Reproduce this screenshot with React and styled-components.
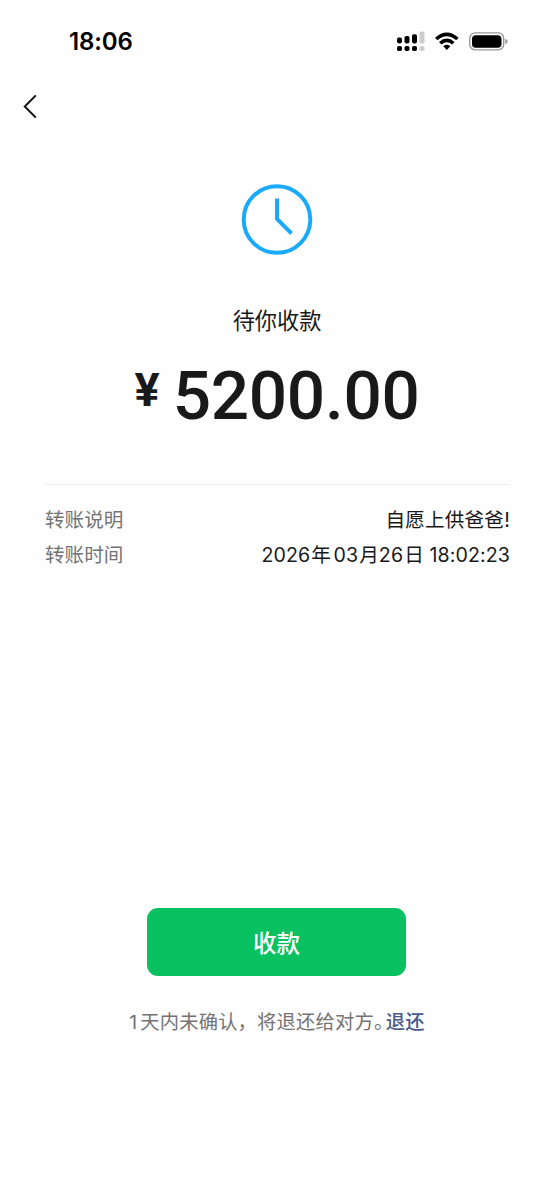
import React from 'react';
import styled, { createGlobalStyle } from 'styled-components';


const GlobalStyle = createGlobalStyle`
  * {
    box-sizing: border-box;
  }

  body {
    margin: 0;
    background-color: #fefefe;
    font-family: Inter, 'Noto Sans CJK SC', sans-serif;
    color: #191919;
  }
`;

const Page = styled.div`
  height: 1200px;
  display: flex;
  flex-direction: column;
  overflow: hidden;
`;

const StatusBar = styled.header`
  height: 82px;
  padding: 2px 46px 0 69px;
  display: flex;
  align-items: center;
  justify-content: space-between;
  color: #000;
`;

const Clock = styled.span`
  font-size: 24px;
  font-weight: 600;
  line-height: 28px;
  letter-spacing: -.1px;
`;

const StatusIcons = styled.svg`
  display: block;
`;

const NavBar = styled.nav`
  height: 50px;
  padding-left: 22px;
  display: flex;
  align-items: center;
`;

const BackButton = styled.button`
  padding: 0;
  border: none;
  background: none;
  line-height: 0;
`;

const Summary = styled.section`
  height: 352px;
  padding-top: 51px;
  display: flex;
  flex-direction: column;
  align-items: center;
`;

const Status = styled.div`
  margin-top: 50px;
  font-size: 22.2px;
  line-height: 32px;
`;

const Amount = styled.div`
  margin-top: 19px;
  display: flex;
  font-family: Roboto, sans-serif;
  font-weight: 500;
`;

const Currency = styled.span`
  margin-right: 13px;
  font-size: 47px;
  font-weight: 700;
  line-height: 67px;
`;

const Figure = styled.span`
  font-size: 67.5px;
  line-height: 80px;
  letter-spacing: -.3px;
`;

const Details = styled.dl`
  height: 424px;
  margin: 0 44px 0 45px;
  padding-top: 18px;
  border-top: 1px solid #efefef;
`;

const Row = styled.div`
  height: 35px;
  display: flex;
  justify-content: space-between;
  font-size: 19.6px;
  line-height: 35px;
  white-space: pre;
`;

const Label = styled.dt`
  color: #737373;
`;

const Value = styled.dd`
  margin: 0;
  letter-spacing: ${props => props.$spacing || '0'};
`;

const Unit = styled.span`
  margin: 0 ${props => props.$after || '0'} 0 1px;
`;

const Footer = styled.footer`
  display: flex;
  flex-direction: column;
  align-items: center;
`;

const AcceptButton = styled.button`
  width: 259px;
  height: 68px;
  margin-right: 1px;
  padding: 0;
  border: none;
  border-radius: 11px;
  background-color: #09c160;
  color: #fff;
  font-family: inherit;
  font-size: 23.5px;
  font-weight: 500;
`;

const Notice = styled.p`
  margin: 31px 0 0;
  font-size: 19.3px;
  line-height: 30px;
  letter-spacing: .2px;
  color: #737373;
  white-space: nowrap;
`;

const Days = styled.span`
  margin-right: 3px;
`;

const FullStop = styled.span`
  margin-right: 2px;
  font-feature-settings: 'halt';
`;

const ReturnLink = styled.span`
  color: #475a8c;
  font-weight: 500;
`;


const SignalIcon = () => (
  <>
    <rect x='1' y='6.6' width='5' height='5.8' rx='1.8' />
    <rect x='8.5' y='5' width='5' height='7.4' rx='1.8' />
    <rect x='16' y='3.2' width='5' height='9.2' rx='1.8' />
    <rect x='23.5' y='.6' width='5' height='11.8' rx='1.6' fill='#ccc' />
    <rect x='1' y='15' width='5' height='5' rx='1.8' />
    <rect x='8.5' y='15' width='5' height='5' rx='1.8' />
    <rect x='16' y='15' width='5' height='5' rx='1.8' />
    <rect x='23.5' y='15' width='5' height='5' rx='1.8' fill='#ccc' />
  </>
);

const WifiIcon = () => (
  <>
    <path d='M39 6.7 Q50.8 -3.6 62.6 6.7 L60.2 9.3 Q50.8 1.2 41.4 9.3 Z' />
    <path d='M43 10.9 Q50.8 4.2 58.6 10.9 L56.1 13.5 Q50.8 9.1 45.5 13.5 Z' />
    <path d='M47.3 15.3 Q50.8 12.4 54.3 15.3 L50.8 18.9 Z' />
  </>
);

const BatteryIcon = () => (
  <>
    <rect x='73.7' y='1.9' width='34' height='17' rx='5.5' fill='none' stroke='#999' strokeWidth='1.4' />
    <rect x='76' y='4.2' width='29.5' height='12.5' rx='3.8' />
    <path d='M109.3 7.7 Q111.6 8.3 111.6 10.4 Q111.6 12.5 109.3 13.1 Z' fill='#999' />
  </>
);


class App extends React.Component {
  render() {
    return (
      <Page>
        <GlobalStyle />
        <StatusBar>
          <Clock>18:06</Clock>
          <StatusIcons width='112' height='22' viewBox='0 0 112 22'>
            <SignalIcon />
            <WifiIcon />
            <BatteryIcon />
          </StatusIcons>
        </StatusBar>
        <NavBar>
          <BackButton aria-label='返回'>
            <svg width='16' height='26' viewBox='0 0 16 26' fill='none' stroke='#111' strokeWidth='2'>
              <path d='M13.8 1.4 L2.8 12.5 L13.8 23.6' />
            </svg>
          </BackButton>
        </NavBar>
        <Summary>
          <svg width='72' height='72' viewBox='0 0 72 72' fill='none' stroke='#1aaafc' strokeWidth='4'>
            <circle cx='36' cy='36.5' r='33.3' />
            <path d='M36 15.5 V36 L50.5 50.5' />
          </svg>
          <Status>待你收款</Status>
          <Amount>
            <Currency>¥</Currency>
            <Figure>5200.00</Figure>
          </Amount>
        </Summary>
        <Details>
          <Row>
            <Label>转账说明</Label>
            <Value $spacing='.2px'>自愿上供爸爸!</Value>
          </Row>
          <Row>
            <Label>转账时间</Label>
            <Value $spacing='.1px'>
              2026<Unit $after='2.5px'>年</Unit>03<Unit>月</Unit>26<Unit>日</Unit> 18:02:23
            </Value>
          </Row>
        </Details>
        <Footer>
          <AcceptButton>收款</AcceptButton>
          <Notice>
            <Days>1</Days>天内未确认，将退还给对方<FullStop>。</FullStop>
            <ReturnLink>退还</ReturnLink>
          </Notice>
        </Footer>
      </Page>
    );
  }
}

export default App;
